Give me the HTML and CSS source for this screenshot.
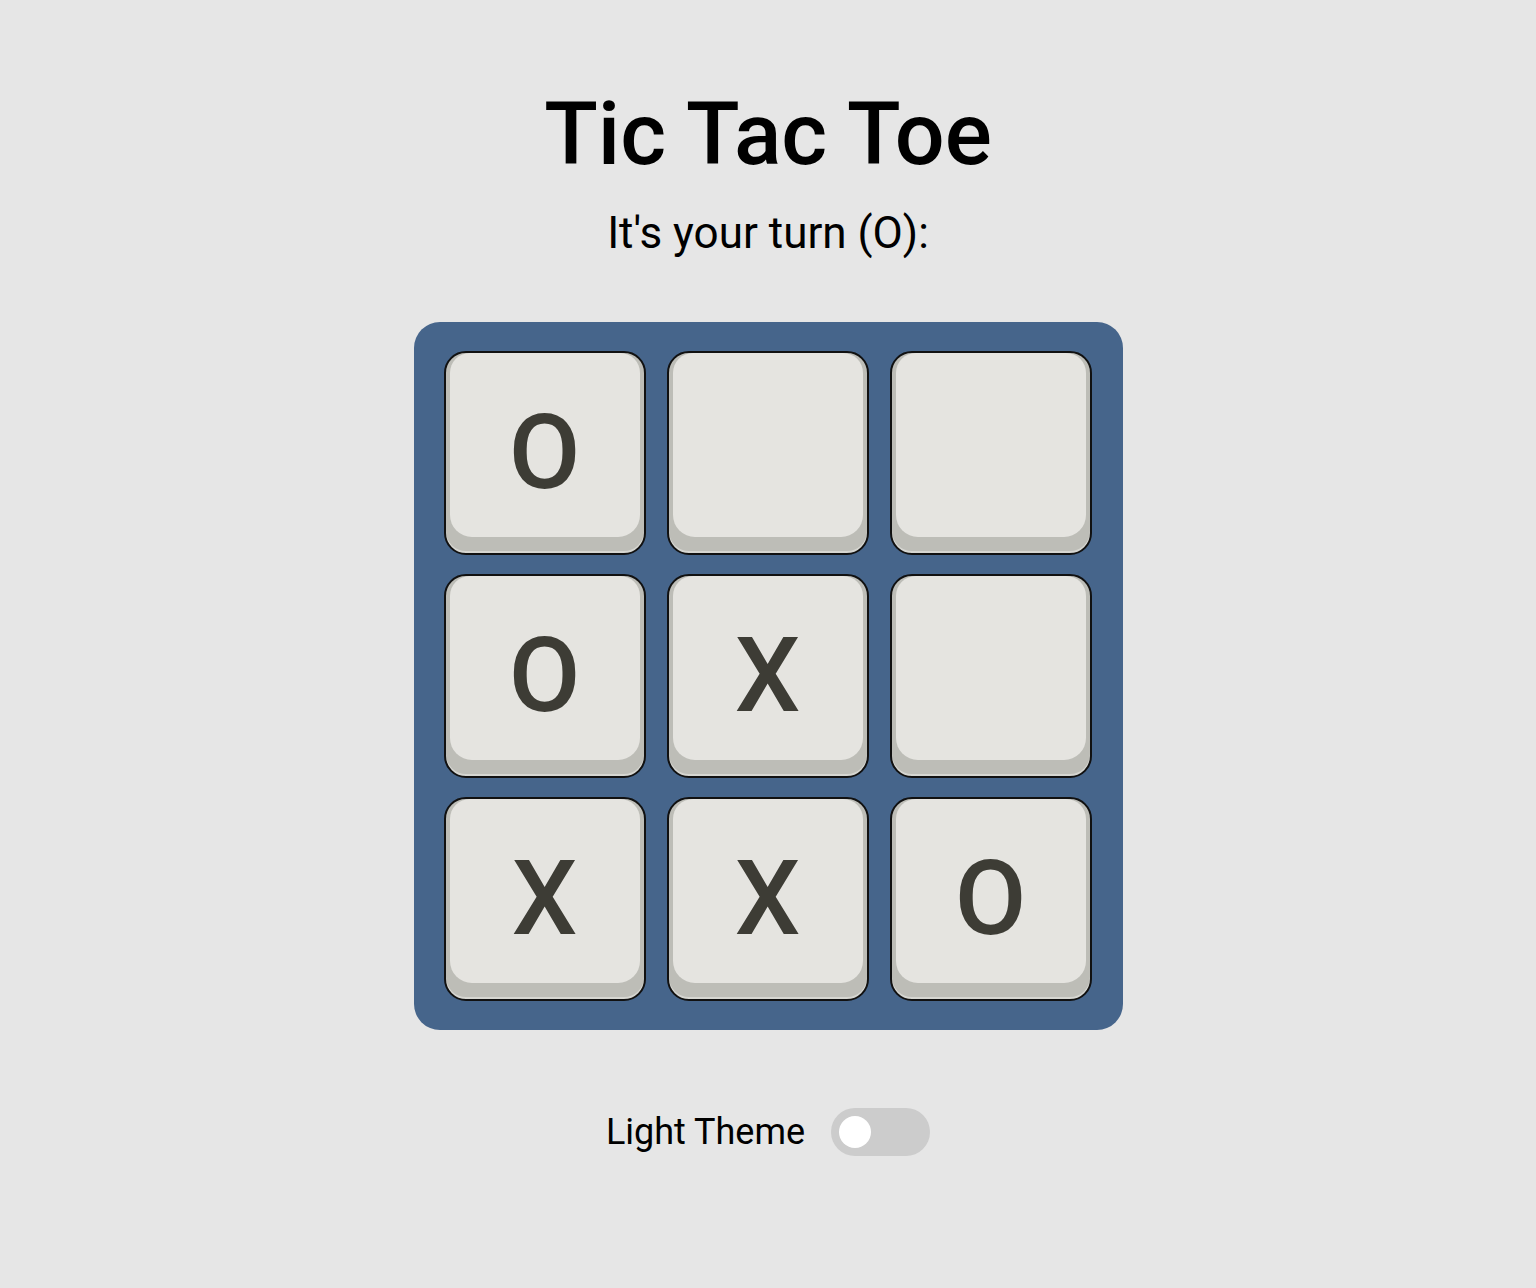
FILE: index.html
```html
<!DOCTYPE html>
<html>
<head>
<meta charset="utf-8">
<link rel="stylesheet" href="styles.css">
</head>
<body>
<main class="page">
  <h1 class="title">Tic Tac Toe</h1>
  <p class="status">It's your turn (O):</p>
  <div class="board">
    <button class="cell"><span class="face">O</span></button>
    <button class="cell"><span class="face"></span></button>
    <button class="cell"><span class="face"></span></button>
    <button class="cell"><span class="face">O</span></button>
    <button class="cell"><span class="face">X</span></button>
    <button class="cell"><span class="face"></span></button>
    <button class="cell"><span class="face">X</span></button>
    <button class="cell"><span class="face">X</span></button>
    <button class="cell"><span class="face">O</span></button>
  </div>
  <div class="theme">
    <span class="theme-label">Light Theme</span>
    <span class="switch"><span class="knob"></span></span>
  </div>
</main>
</body>
</html>
```
FILE: styles.css
```css
html, body {
  margin: 0;
  padding: 0;
  background: #e6e6e6;
}
body {
  font-family: Roboto, "Liberation Sans", sans-serif;
  color: #000;
}
.page {
  display: flex;
  flex-direction: column;
  align-items: center;
  padding-top: 82px;
}
.title {
  margin: 0;
  font-size: 88px;
  font-weight: 500;
  line-height: 104px;
}
.status {
  margin: 21px 0 0 0;
  font-size: 44px;
  font-weight: 400;
  line-height: 52px;
}
.board {
  margin-top: 63px;
  background: #46658b;
  border-radius: 26px;
  padding: 29px 31px 29px 30px;
  display: grid;
  grid-template-columns: repeat(3, 202px);
  grid-template-rows: repeat(3, 204px);
  gap: 19px 21px;
}
.cell {
  margin: 0;
  padding: 0 4px 16px 4px;
  border: 2px solid #111;
  border-radius: 22px;
  background: #bdbdb7;
  box-shadow: inset 0 -2px 0 #d6d6d1;
  display: flex;
  font-family: Roboto, "Liberation Sans", sans-serif;
}
.face {
  flex: 1;
  display: flex;
  align-items: center;
  justify-content: center;
  background: #e5e4e0;
  border-radius: 20px 20px 22px 22px;
  font-size: 104px;
  font-weight: 500;
  color: #3d3c35;
  padding-top: 14px;
}
.theme {
  margin-top: 78px;
  display: flex;
  align-items: center;
  gap: 26px;
}
.theme-label {
  font-size: 36px;
}
.switch {
  width: 99px;
  height: 48px;
  border-radius: 24px;
  background: #cccccc;
  display: flex;
  align-items: center;
  padding-left: 8px;
  box-sizing: border-box;
}
.knob {
  width: 32px;
  height: 32px;
  border-radius: 50%;
  background: #fff;
}
```
